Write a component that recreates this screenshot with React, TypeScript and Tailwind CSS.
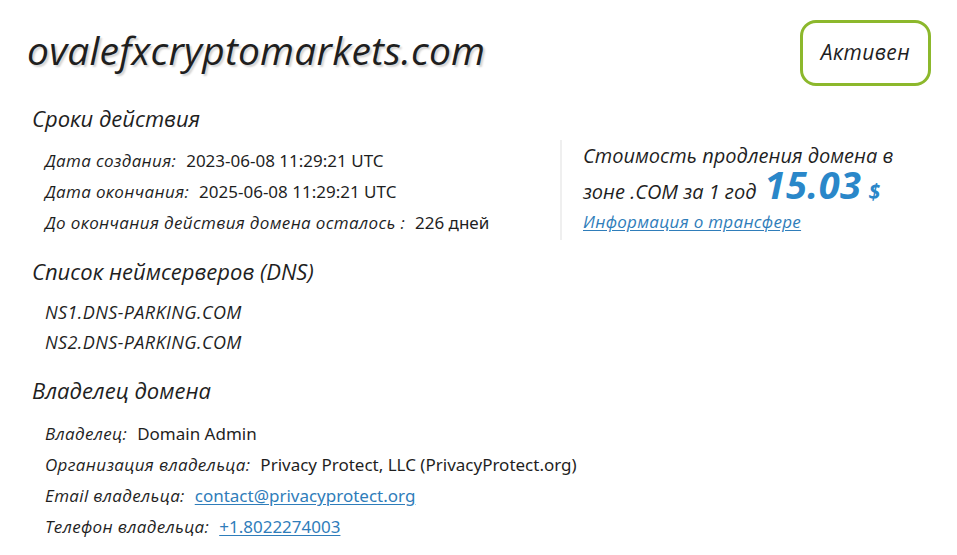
import React from "react";

const labelFont = "font-['Open_Sans',sans-serif] italic";
const valueFont = "font-['Noto_Sans',sans-serif]";

function InfoRow({ label, children }: { label: string; children: React.ReactNode }) {
  return (
    <div className="flex items-center h-[31px] text-[17px] text-[#1f1f1f] whitespace-nowrap">
      <span className={`${labelFont} tracking-[0.35px] mr-[10px]`}>{label}</span>
      <span className={valueFont}>{children}</span>
    </div>
  );
}

function SectionTitle({ children, className = "" }: { children: React.ReactNode; className?: string }) {
  return (
    <h2 className={`${labelFont} text-[22px] leading-[30px] h-[30px] text-[#1f1f1f] font-normal ${className}`}>
      {children}
    </h2>
  );
}

export default function App() {
  return (
    <div className="w-[957px] h-[555px] bg-white overflow-hidden text-[#1f1f1f]">
      {/* header */}
      <div className="flex justify-between items-start h-[86px]">
        <h1
          className={`${labelFont} ml-[27px] mt-[26px] text-[39px] leading-[48px] font-medium tracking-[0.2px] [text-shadow:2px_2px_2px_rgba(0,0,0,0.18)]`}
        >
          ovalefxcryptomarkets.com
        </h1>
        <div className="mt-[20px] mr-[26px] w-[131px] h-[66px] rounded-[16px] border-[3px] border-[#8cb82c] flex items-center justify-center">
          <span className={`${labelFont} text-[21px] tracking-[0.4px]`}>Активен</span>
        </div>
      </div>

      <div className="pl-[32px]">
        <SectionTitle className="mt-[17px]">Сроки действия</SectionTitle>

        <div className="flex mt-[7px] h-[100px]">
          <div className="w-[528px] pl-[13px] pt-[5px]">
            <InfoRow label="Дата создания:">2023-06-08 11:29:21 UTC</InfoRow>
            <InfoRow label="Дата окончания:">2025-06-08 11:29:21 UTC</InfoRow>
            <InfoRow label="До окончания действия домена осталось :">226 дней</InfoRow>
          </div>
          <div className="border-l-2 border-[#efefef] pl-[21px]">
            <div className={`${labelFont} text-[20px] leading-[32px] h-[32px] whitespace-nowrap`}>
              Стоимость продления домена в
            </div>
            <div className={`${labelFont} -mt-[7px] text-[20px] leading-[32px] h-[32px] whitespace-nowrap flex items-baseline`}>
              <span>зоне .COM за 1 год</span>
              <span className="ml-[8px] text-[#2a87c9] text-[38px] leading-none font-bold tracking-[0.5px]">15.03</span>
              <span className="ml-[7px] text-[#2a87c9] text-[21px] leading-none font-bold">$</span>
            </div>
            <a
              href="#"
              className={`${labelFont} block mt-[9px] text-[17px] tracking-[0.3px] leading-[32px] text-[#2f7dba] underline underline-offset-2`}
            >
              Информация о трансфере
            </a>
          </div>
        </div>

        <SectionTitle className="mt-[16px]">Список неймсерверов (DNS)</SectionTitle>
        <div className={`${labelFont} pl-[13px] mt-[11px] text-[18px] tracking-[0.4px] leading-[30px]`}>
          <div>NS1.DNS-PARKING.COM</div>
          <div>NS2.DNS-PARKING.COM</div>
        </div>

        <SectionTitle className="mt-[18px]">Владелец домена</SectionTitle>
        <div className="pl-[13px] mt-[13px]">
          <InfoRow label="Владелец:">Domain Admin</InfoRow>
          <InfoRow label="Организация владельца:">Privacy Protect, LLC (PrivacyProtect.org)</InfoRow>
          <InfoRow label="Email владельца:">
            <a href="#" className="text-[#2f7dba] underline underline-offset-2">contact@privacyprotect.org</a>
          </InfoRow>
          <InfoRow label="Телефон владельца:">
            <a href="#" className="text-[#2f7dba] underline underline-offset-2">+1.8022274003</a>
          </InfoRow>
        </div>
      </div>
    </div>
  );
}
